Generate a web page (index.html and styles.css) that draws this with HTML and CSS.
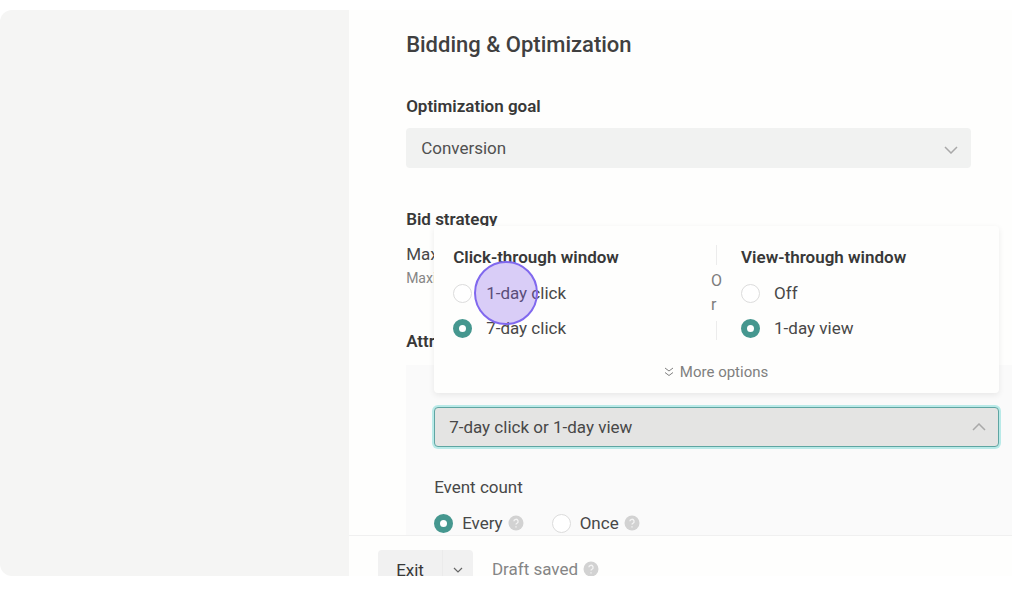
FILE: index.html
```html
<!DOCTYPE html>
<html lang="en">
<head>
<meta charset="utf-8">
<meta name="viewport" content="width=device-width, initial-scale=1">
<title>Bidding &amp; Optimization</title>
<link rel="stylesheet" href="styles.css">
</head>
<body>
<div class="app">
  <aside class="sidebar"></aside>
  <main class="main">
    <form class="form" id="bidding">
      <h1 class="title">Bidding &amp; Optimization</h1>

      <section class="field">
        <label class="heading" for="goal">Optimization goal</label>
        <div class="select">
          <select class="select-control" id="goal"><option>Conversion</option></select>
          <svg class="chevron" viewBox="0 0 14 8" aria-hidden="true"><path d="M1 1l6 6 6-6"/></svg>
        </div>
      </section>

      <section class="strategy">
        <h2 class="heading">Bid strategy</h2>
        <p class="strategy-name">Maximum</p>
        <p class="strategy-hint">Maximize</p>
      </section>

      <section class="attribution">
        <h2 class="heading">Attribution</h2>
        <div class="attribution-box">
          <div class="picker">
            <button class="picker-trigger" type="button" aria-haspopup="dialog" aria-expanded="true">
              <span>7-day click or 1-day view</span>
              <svg class="chevron" viewBox="0 0 14 8" aria-hidden="true"><path d="M1 7l6-6 6 6"/></svg>
            </button>
            <div class="popup">
              <div class="windows">
                <fieldset class="window">
                  <legend class="window-title">Click-through window</legend>
                  <label class="option"><input class="radio" type="radio" name="click">1-day click</label>
                  <label class="option"><input class="radio" type="radio" name="click" checked>7-day click</label>
                </fieldset>
                <div class="divider"><span class="divider-text">Or</span></div>
                <fieldset class="window">
                  <legend class="window-title">View-through window</legend>
                  <label class="option"><input class="radio" type="radio" name="view">Off</label>
                  <label class="option"><input class="radio" type="radio" name="view" checked>1-day view</label>
                </fieldset>
              </div>
              <button class="more" type="button">
                <svg class="more-icon" viewBox="0 0 10 10" aria-hidden="true"><path d="M1 1l4 3 4-3M1 5.500l4 3 4-3"/></svg>
                More options
              </button>
              <span class="pointer"></span>
            </div>
          </div>

          <fieldset class="count">
            <legend class="count-title">Event count</legend>
            <div class="count-options">
              <div class="count-item">
                <label class="count-option"><input class="radio" type="radio" name="count" checked>Every</label>
                <svg class="help" viewBox="0 0 16 16" aria-hidden="true"><circle cx="8" cy="8" r="7.500"/><path d="M5.900 6.300a2.100 2.100 0 1 1 3.100 1.900c-.7.400-1 .7-1 1.400M8 11.300v1.200"/></svg>
              </div>
              <div class="count-item">
                <label class="count-option"><input class="radio" type="radio" name="count">Once</label>
                <svg class="help" viewBox="0 0 16 16" aria-hidden="true"><circle cx="8" cy="8" r="7.500"/><path d="M5.900 6.300a2.100 2.100 0 1 1 3.100 1.900c-.7.400-1 .7-1 1.400M8 11.300v1.200"/></svg>
              </div>
            </div>
          </fieldset>
        </div>
      </section>
    </form>

    <footer class="footer">
      <div class="exit">
        <button class="exit-main" type="button">Exit</button>
        <button class="exit-more" type="button" aria-label="Exit options">
          <svg class="exit-icon" viewBox="0 0 10 6" aria-hidden="true"><path d="M1 1l4 4 4-4"/></svg>
        </button>
      </div>
      <span class="draft">Draft saved
        <svg class="help" viewBox="0 0 16 16" aria-hidden="true"><circle cx="8" cy="8" r="7.500"/><path d="M5.900 6.300a2.100 2.100 0 1 1 3.100 1.900c-.7.400-1 .7-1 1.400M8 11.300v1.200"/></svg>
      </span>
    </footer>
  </main>
</div>
</body>
</html>
```
FILE: styles.css
```css
* { box-sizing: border-box; }

body {
  margin: 0;
  padding: 10px 12px 13px 0;
  background: #fff;
  color: #484848;
  font: 17px/24px Roboto, "Liberation Sans", sans-serif;
}

h1, h2, p { margin: 0; }
fieldset { margin: 0; padding: 0; border: 0; min-width: 0; }
legend { padding: 0; }
button, select { font: inherit; color: inherit; border: 0; margin: 0; }
svg { fill: none; stroke: currentColor; flex: none; }

.app {
  display: flex;
  height: calc(100vh - 23px);
  border-radius: 12px 0 0 12px;
  overflow: hidden;
}
.sidebar { flex: 0 0 34.500%; background: #f5f5f4; }
.main {
  flex: 1;
  min-width: 0;
  display: flex;
  flex-direction: column;
  background: #fefefd;
}

.form {
  flex: 1;
  min-height: 0;
  overflow: hidden;
  padding: 21px 0 0 57px;
}
.title { font-size: 22px; line-height: 28px; font-weight: 500; color: #404040; }
.heading { display: block; font-size: 17px; line-height: 24px; font-weight: 600; color: #383838; }
.field { margin: 35px 41px 0 0; }

.select { position: relative; margin-top: 10px; }
.select-control {
  display: block;
  width: 100%;
  height: 40px;
  padding: 0 15px;
  border-radius: 4px;
  background: #f1f2f1;
  color: #505050;
  appearance: none;
}
.chevron { width: 14px; height: 8px; color: #a9a9a9; stroke-width: 1.500; }
.select .chevron { position: absolute; right: 13px; top: 18px; pointer-events: none; }

.strategy { margin-top: 39px; }
.strategy-name { margin-top: 11px; }
.strategy-hint { font-size: 14px; color: #858585; }

.attribution { margin-top: 39px; }
.attribution-box {
  margin-top: 12px;
  padding: 42px 13px 20px 28px;
  background: #fafafa;
}
.picker { position: relative; }
.picker-trigger {
  display: flex;
  align-items: center;
  justify-content: space-between;
  width: 100%;
  height: 40px;
  padding: 0 12px 0 14px;
  border: 1px solid #5fa5a2;
  border-radius: 4px;
  background: #e4e4e3;
  box-shadow: 0 0 0 2px #b9eae8;
}

.popup {
  position: absolute;
  left: 0;
  right: 0;
  bottom: calc(100% + 14px);
  padding: 19px 20px 11px 19px;
  border-radius: 4px;
  background: #fefefd;
  box-shadow: 0 2px 6px rgba(0, 0, 0, 0.08);
}
.windows { display: flex; gap: 20px; }
.window { flex: 1; }
.window-title { font-weight: 600; color: #383838; }
.option { display: flex; align-items: center; gap: 14px; margin-top: 11px; }
.window-title + .option { margin-top: 12px; }
.radio {
  appearance: none;
  width: 19px;
  height: 19px;
  margin: 0;
  border: 1px solid #dcdcdc;
  border-radius: 50%;
  background: #fff;
}
.radio:checked { border: 6px solid #45978f; }

.divider {
  display: flex;
  flex-direction: column;
  align-items: center;
  gap: 4px;
  width: 10px;
  color: #7c7c7c;
}
.divider::before, .divider::after { content: ""; flex: 1; width: 1px; background: #ececec; }
.divider-text { width: 10px; font-size: 16px; word-break: break-all; }

.more {
  display: flex;
  align-items: center;
  gap: 6px;
  margin: 22px auto 0;
  padding: 0;
  background: none;
  color: #808080;
  font-size: 15px;
  line-height: 20px;
}
.more-icon { width: 10px; height: 10px; }

.pointer {
  position: absolute;
  left: 40px;
  top: 35px;
  width: 64px;
  height: 64px;
  border: 2px solid #8068ee;
  border-radius: 50%;
  background: rgba(134, 92, 236, 0.3);
}

.count { margin-top: 28px; }
.count-options { display: flex; gap: 28px; margin-top: 12px; }
.count-item { display: flex; align-items: center; gap: 5px; }
.count-option { display: flex; align-items: center; gap: 9px; }
.help { width: 16px; height: 16px; color: #f4f4f4; stroke-width: 1.300; }
.help circle { fill: #d2d2d2; stroke: none; }

.footer {
  flex: 0 0 41px;
  min-height: 0;
  display: flex;
  align-items: flex-start;
  gap: 19px;
  padding: 14px 29px 0;
  border-top: 1px solid #f0f0f0;
  background: #fefefd;
}
.exit { display: flex; flex: none; height: 40px; border-radius: 4px; overflow: hidden; background: #f1f1f1; }
.exit-main { padding: 0 18px; background: none; color: #383838; }
.exit-more { padding: 0 10px; border-left: 1px solid #ebebeb; background: none; color: #666; }
.exit-icon { display: block; width: 10px; height: 6px; stroke-width: 1.200; }
.draft { display: flex; align-items: center; gap: 5px; height: 38px; color: #858585; }
```
